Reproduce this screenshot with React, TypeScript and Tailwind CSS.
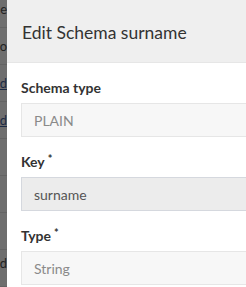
import React from 'react';

// last visible glyph of each row of the list under the backdrop
const rows = [
  { t: 'e', c: 'text-[#222]' },
  { t: 'o', c: 'text-[#222]' },
  { t: 'd', c: 'text-[#1d2b45] underline' },
  { t: 'd', c: 'text-[#1d2b45] underline' },
  { t: '', c: '' },
  { t: '', c: '' },
  { t: '', c: '' },
  { t: 'd', c: 'text-[#222] -mt-[10px]' },
];

function Field({ label, required, value, tone }: { label: string; required?: boolean; value: string; tone: 'muted' | 'active' }) {
  return (
    <div className="mb-[14px]">
      <div className="h-[22px] flex items-center text-[14px] font-bold text-[#333] leading-none">
        {label}
        {required && <span className="ml-[3px] text-[11px] self-start mt-[2px]">*</span>}
      </div>
      <div
        className={
          tone === 'active'
            ? 'mt-[4px] h-[34px] flex items-center pl-[12px] border border-[#d5d8de] bg-[#ececec] text-[14px] text-[#555]'
            : 'mt-[4px] h-[34px] flex items-center pl-[12px] border border-[#e6e6e6] bg-[#f7f7f7] text-[14px] text-[#8a8a8a]'
        }
      >
        {value}
      </div>
    </div>
  );
}

export default function App() {
  return (
    <div className="w-[246px] h-[287px] overflow-hidden flex bg-white" style={{ fontFamily: 'Lato, "Open Sans", sans-serif' }}>
      {/* Backdrop over the list behind */}
      <div className="w-[7px] shrink-0 bg-[#6e6e6e] overflow-hidden">
        <div className="-mt-[9px]">
          {rows.map((r, i) => (
            <div key={i} className="h-[37px] border-b border-[#636363] flex items-center justify-end text-[13px] leading-none">
              <span className={r.c}>{r.t}</span>
            </div>
          ))}
        </div>
      </div>

      {/* Modal */}
      <div className="flex-1 min-w-0">
        <div className="h-[63px] bg-[#efefef] border-b border-[#e6e6e6] flex items-center pl-[15px] pt-[4px] text-[17.5px] text-[#333]">
          Edit Schema surname
        </div>
        <div className="pl-[14px] -mr-[10px] pt-[14px]">
          <Field label="Schema type" value="PLAIN" tone="muted" />
          <Field label="Key" required value="surname" tone="active" />
          <Field label="Type" required value="String" tone="muted" />
        </div>
      </div>
    </div>
  );
}
